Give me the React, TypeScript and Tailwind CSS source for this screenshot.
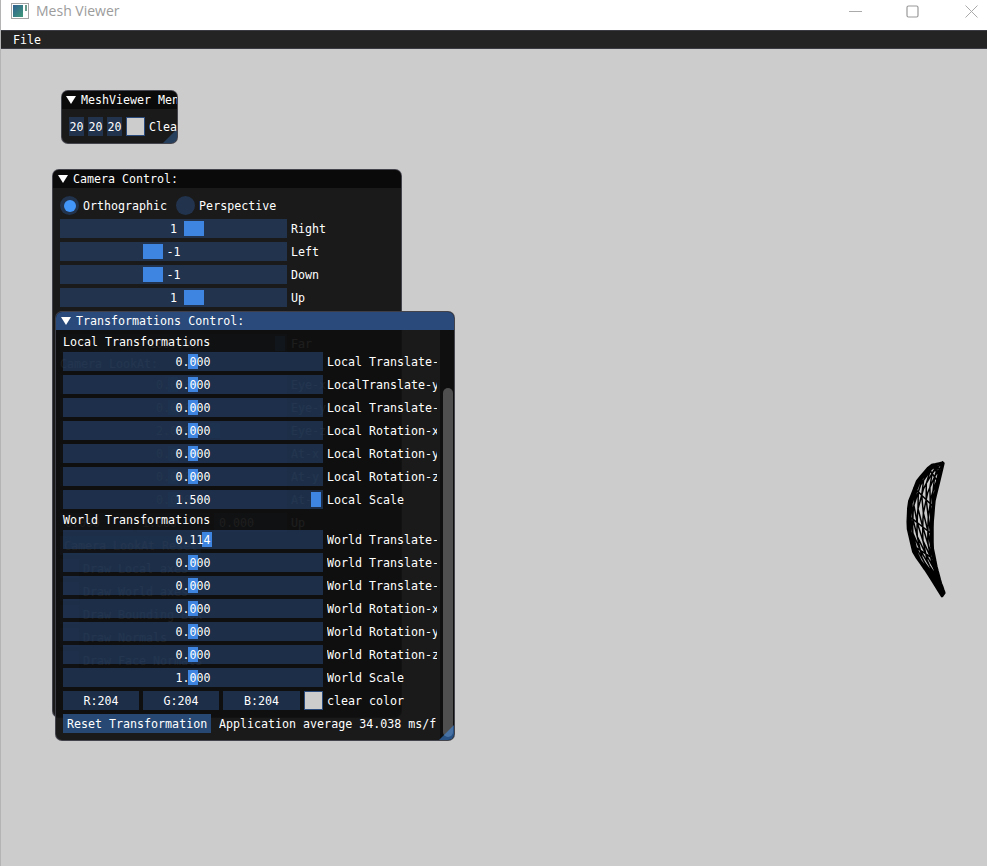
const OUTER: [number, number][] = [[943, 462], [930, 465], [917, 480], [908, 503], [907, 527], [913, 553], [927, 573], [942, 597]];
const INNER: [number, number][] = [[944, 463], [940, 480], [935, 500], [933, 523], [933, 547], [937, 567], [941, 582], [945, 593]];

function at(curve: [number, number][], t: number): [number, number] {
  const p = t * (curve.length - 1);
  const i = Math.min(Math.floor(p), curve.length - 2);
  const f = p - i;
  return [curve[i][0] + (curve[i + 1][0] - curve[i][0]) * f, curve[i][1] + (curve[i + 1][1] - curve[i][1]) * f];
}

function meshPath() {
  const across = [0, 0.04, 0.08, 0.13, 0.21, 0.38, 0.6, 0.8, 0.9, 0.96, 1];
  const rows = 24;
  const pt = (r: number, s: number) => {
    const a = at(OUTER, r / rows);
    const b = at(INNER, r / rows);
    return [a[0] + (b[0] - a[0]) * s, a[1] + (b[1] - a[1]) * s];
  };
  let d = "";
  for (let r = 0; r <= rows; r++) {
    if (r > 4 && r < 20 && r % 4 !== 0) continue;
    across.forEach((s, i) => {
      const [x, y] = pt(r, s);
      d += `${i ? "L" : "M"}${x.toFixed(1)} ${y.toFixed(1)}`;
    });
  }
  across.forEach((s) => {
    for (let r = 0; r <= rows; r++) {
      const [x, y] = pt(r, s);
      d += `${r ? "L" : "M"}${x.toFixed(1)} ${y.toFixed(1)}`;
    }
  });
  for (let r = 0; r < rows; r += 2) {
    across.slice(0, -1).forEach((s, i) => {
      const [x, y] = pt(r, s);
      const [u, v] = pt(r + 2, across[i + 1]);
      d += `M${x.toFixed(1)} ${y.toFixed(1)}L${u.toFixed(1)} ${v.toFixed(1)}`;
    });
  }
  return d;
}

function Arrow() {
  return (
    <svg width="10" height="8" viewBox="0 0 10 8" className="shrink-0">
      <polygon points="0,0 10,0 5,8" fill="#ffffff" />
    </svg>
  );
}

function Slider({ w, value, grab, gw = 10 }: { w: string; value: string; grab: number; gw?: number }) {
  return (
    <div className={`relative h-[19px] shrink-0 bg-[#294a7a8a] flex items-center justify-center ${w}`}>
      <div className="absolute top-[2px] h-[15px] bg-[#3d85e0]" style={{ left: grab, width: gw }} />
      <span className="relative">{value}</span>
    </div>
  );
}

function CamRow({ value, grab, label, gw = 10 }: { value: string; grab: number; label: string; gw?: number }) {
  return (
    <div className="flex items-center gap-[4px] h-[19px]">
      <Slider w="w-[227px]" value={value} grab={grab} gw={gw} />
      <span>{label}</span>
    </div>
  );
}

function TRow({ value, grab, label }: { value: string; grab: number; label: string }) {
  return (
    <div className="flex items-center gap-[4px] h-[19px]">
      <Slider w="w-[260px]" value={value} grab={grab} />
      <span className="block w-[110px] overflow-hidden whitespace-nowrap">{label}</span>
    </div>
  );
}

function Check({ label }: { label: string }) {
  return (
    <div className="flex items-center gap-[4px] h-[19px]">
      <div className="w-[19px] h-[19px] bg-[#294a7a8a]" />
      <span>{label}</span>
    </div>
  );
}

function Grip({ size, opacity }: { size: number; opacity: number }) {
  return (
    <svg width={size} height={size} viewBox="0 0 10 10" className="absolute right-0 bottom-0">
      <polygon points="10,0 10,10 0,10" fill="#4296fa" fillOpacity={opacity} />
    </svg>
  );
}

const windowBox = "absolute rounded-[7px] border border-[#6e6e8080] bg-[#0f0f0ff0] overflow-hidden";

export default function App() {
  return (
    <div className="relative w-[987px] h-[866px] overflow-hidden flex flex-col bg-[#cccccc] border-l border-[#b4b4b4] text-white text-[11.65px] leading-[13px] font-['DejaVu_Sans_Mono',monospace] [&_span]:translate-y-[1px]">
      <div className="h-[30px] shrink-0 bg-white flex items-center justify-between text-[#9c9c9c] font-['Open_Sans',sans-serif] text-[14px]">
        <div className="flex items-center gap-[7px] pl-[10px] pb-[9px]">
          <svg width="18" height="16" viewBox="0 0 18 16">
            <defs>
              <linearGradient id="g" x1="0" y1="0" x2="1" y2="1">
                <stop offset="0" stopColor="#2f5f90" />
                <stop offset="1" stopColor="#3f9a7a" />
              </linearGradient>
            </defs>
            <rect x="0.5" y="0.5" width="17" height="15" fill="#ffffff" stroke="#a5a5a5" />
            <rect x="2" y="2" width="10" height="12" fill="url(#g)" />
            <rect x="14" y="2" width="2" height="6" fill="#6a9a8a" />
          </svg>
          <span className="translate-y-0!">Mesh Viewer</span>
        </div>
        <div className="flex items-center gap-[45px] pr-[9px] pb-[8px]">
          <svg width="13" height="12" viewBox="0 0 13 12"><path d="M0 6.5H13" stroke="#aaaaaa" /></svg>
          <svg width="13" height="13" viewBox="0 0 13 13" className="-translate-x-[1px]"><rect x="1" y="1" width="11" height="11" rx="1.5" fill="none" stroke="#999999" strokeWidth="1.2" /></svg>
          <svg width="13" height="13" viewBox="0 0 13 13"><path d="M0.5 0.5L12.5 12.5M12.5 0.5L0.5 12.5" stroke="#aaaaaa" /></svg>
        </div>
      </div>
      <div className="h-[19px] shrink-0 bg-[#242424] border-y border-[#3c3c44] flex items-center pl-[12px]">
        <span>File</span>
      </div>

      <div className="relative flex-1">
        <svg width="987" height="817" viewBox="0 49 987 817" className="absolute left-[-1px] top-0">
          <path d={meshPath()} fill="none" stroke="#000000" strokeWidth="1.5" strokeLinejoin="bevel" />
        </svg>

        {/* MeshViewer Menu */}
        <div className={`${windowBox} left-[60px] top-[41px] w-[117px] h-[54px]`}>
          <div className="h-[18px] bg-[#0a0a0a] flex items-center gap-[5px] pl-[4px] whitespace-nowrap">
            <Arrow />
            <span className="translate-y-0!">MeshViewer Menu</span>
          </div>
          <div className="flex items-center gap-[4px] pl-[7px] pt-[8px] whitespace-nowrap">
            {["20", "20", "20"].map((v, i) => (
              <div key={i} className="w-[15px] h-[19px] shrink-0 bg-[#294a7a8a] flex items-center justify-center"><span>{v}</span></div>
            ))}
            <div className="w-[19px] h-[19px] shrink-0 bg-[#cccccc] border border-[#294a7a]" />
            <span>Clear</span>
          </div>
          <Grip size={14} opacity={0.3} />
        </div>

        {/* Camera Control */}
        <div className={`${windowBox} left-[51px] top-[120px] w-[350px] h-[549px]`}>
          <div className="h-[18px] bg-[#0a0a0a] flex items-center gap-[5px] pl-[5px]">
            <Arrow />
            <span className="translate-y-0!">Camera Control:</span>
          </div>
          <div className="flex flex-col gap-[4px] pl-[7px] pt-[8px]">
            <div className="flex items-center h-[19px]">
              <div className="w-[19px] h-[19px] rounded-full bg-[#294a7a8a] flex items-center justify-center">
                <div className="w-[12px] h-[12px] rounded-full bg-[#4296fa]" />
              </div>
              <span className="ml-[4px]">Orthographic</span>
              <div className="w-[19px] h-[19px] rounded-full bg-[#294a7a8a] ml-[9px]" />
              <span className="ml-[4px]">Perspective</span>
            </div>
            <CamRow value="1" grab={124} gw={20} label="Right" />
            <CamRow value="-1" grab={83} gw={20} label="Left" />
            <CamRow value="-1" grab={83} gw={20} label="Down" />
            <CamRow value="1" grab={124} gw={20} label="Up" />
            <CamRow value="1.000" grab={10} label="Near" />
            <CamRow value="100.000" grab={215} label="Far" />
            <div className="h-[14px]"><span className="block">Camera LookAt:</span></div>
            <CamRow value="0.000" grab={108} label="Eye-x" />
            <CamRow value="0.000" grab={108} label="Eye-y" />
            <CamRow value="2.000" grab={150} label="Eye-z" />
            <CamRow value="0.000" grab={108} label="At-x" />
            <CamRow value="0.000" grab={108} label="At-y" />
            <CamRow value="0.000" grab={108} label="At-z" />
            <div className="flex items-center gap-[4px] h-[19px]">
              {["0.000", "1.000", "0.000"].map((v, i) => (
                <div key={i} className="w-[73px] h-[19px] bg-[#294a7a8a] flex items-center justify-center pr-[28px]"><span>{v}</span></div>
              ))}
              <span>Up</span>
            </div>
            <div className="h-[19px] w-[141px] bg-[#4296fa66] flex items-center pl-[4px]"><span>Camera LookAt Reset</span></div>
            <Check label="Draw Local axes" />
            <Check label="Draw World axes" />
            <Check label="Draw Bounding Box" />
            <Check label="Draw Normals" />
            <Check label="Draw Face Normals" />
          </div>
        </div>

        {/* Transformations Control */}
        <div className={`${windowBox} left-[54px] top-[262px] w-[400px] h-[430px] flex flex-col`}>
          <div className="h-[18px] shrink-0 bg-[#294a7a] flex items-center gap-[5px] pl-[5px]">
            <Arrow />
            <span className="translate-y-0!">Transformations Control:</span>
          </div>
          <div className="flex-1 flex min-h-0">
            <div className="w-[384px] pl-[7px] pt-[5px] flex flex-col gap-[4px]">
              <div className="h-[13px]"><span className="block">Local Transformations</span></div>
              <TRow value="0.000" grab={125} label="Local Translate-x" />
              <TRow value="0.000" grab={125} label="LocalTranslate-y" />
              <TRow value="0.000" grab={125} label="Local Translate-z" />
              <TRow value="0.000" grab={125} label="Local Rotation-x" />
              <TRow value="0.000" grab={125} label="Local Rotation-y" />
              <TRow value="0.000" grab={125} label="Local Rotation-z" />
              <TRow value="1.500" grab={248} label="Local Scale" />
              <div className="h-[13px]"><span className="block">World Transformations</span></div>
              <TRow value="0.114" grab={139} label="World Translate-x" />
              <TRow value="0.000" grab={125} label="World Translate-y" />
              <TRow value="0.000" grab={125} label="World Translate-z" />
              <TRow value="0.000" grab={125} label="World Rotation-x" />
              <TRow value="0.000" grab={125} label="World Rotation-y" />
              <TRow value="0.000" grab={125} label="World Rotation-z" />
              <TRow value="1.000" grab={125} label="World Scale" />
              <div className="flex items-center gap-[4px] h-[19px]">
                <div className="w-[76px] h-[19px] bg-[#294a7a8a] flex items-center justify-center"><span>R:204</span></div>
                <div className="w-[76px] h-[19px] bg-[#294a7a8a] flex items-center justify-center"><span>G:204</span></div>
                <div className="w-[77px] h-[19px] bg-[#294a7a8a] flex items-center justify-center"><span>B:204</span></div>
                <div className="w-[19px] h-[19px] bg-[#cccccc] border border-[#294a7a]" />
                <span>clear color</span>
              </div>
              <div className="flex items-center h-[19px]">
                <div className="w-[148px] h-[19px] bg-[#264873] flex items-center pl-[4px] shrink-0"><span>Reset Transformation</span></div>
                <span className="block w-[217px] ml-[8px] overflow-hidden whitespace-nowrap">Application average 34.038 ms/frame</span>
              </div>
            </div>
            <div className="w-[14px] bg-[#05050587] pt-[58px] pb-[3px] pl-[3px] flex">
              <div className="w-[10px] rounded-[5px] bg-[#4f4f4f]" />
            </div>
          </div>
          <Grip size={15} opacity={0.5} />
        </div>
      </div>
    </div>
  );
}
